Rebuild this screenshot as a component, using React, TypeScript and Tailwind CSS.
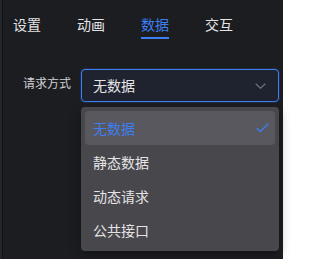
import { useState } from 'react';

const tabs = ['设置', '动画', '数据', '交互'];
const options = ['无数据', '静态数据', '动态请求', '公共接口'];

export default function App() {
  const [active, setActive] = useState(2);
  const [value, setValue] = useState('无数据');

  return (
    <div className="flex h-[259px] w-[283px] bg-[#1c1d21] font-['Noto_Sans_CJK_SC','Noto_Sans',sans-serif]">
      <div className="w-[2px] bg-[#25262a]" />
      <div className="w-px bg-[#111215]" />
      <div className="flex-1">
        <div className="flex gap-[36px] pl-[10px] pt-[14px]">
          {tabs.map((t, i) => (
            <button
              key={t}
              onClick={() => setActive(i)}
              className={`flex flex-col items-center text-[14px] leading-[20px] ${
                active === i ? 'text-[#3d7ef2]' : 'text-[#e4e4e6]'
              }`}
            >
              {t}
              <span
                className={`mt-[3px] h-[2px] w-full ${active === i ? 'bg-[#3d7ef2]' : 'bg-transparent'}`}
              />
            </button>
          ))}
        </div>

        <div className="mt-[30px] flex">
          <label className="w-[78px] pr-[10px] pt-[5px] text-right text-[12px] leading-[17px] text-[#cfd0d4]">
            请求方式
          </label>
          <div className="relative w-[198px]">
            <div className="flex h-[33px] items-center justify-between rounded-[4px] border border-[#3d7ef2] bg-[#1f2330] px-[11px] shadow-[0_0_0_1px_rgba(61,126,242,0.15)]">
              <span className="text-[14px] text-[#e6e6e8]">{value}</span>
              <svg width="11" height="6" viewBox="0 0 11 6" fill="none" className="mr-[1px]">
                <path d="M0.7 0.7L5.5 5.2L10.3 0.7" stroke="#6c6f78" strokeWidth="1.3" />
              </svg>
            </div>
            <div className="absolute left-0 top-[38px] w-[198px] rounded-[4px] bg-[#48474c] p-[4px] shadow-[0_4px_12px_rgba(0,0,0,0.35)]">
              {options.map((o) => (
                <button
                  key={o}
                  onClick={() => setValue(o)}
                  className={`flex h-[34px] w-full items-center justify-between rounded-[4px] pl-[8px] pr-[6px] text-[14px] ${
                    value === o ? 'bg-[#59585e] text-[#3d7ef2]' : 'text-[#e4e4e6]'
                  }`}
                >
                  {o}
                  {value === o && (
                    <svg width="13" height="10" viewBox="0 0 13 10" fill="none">
                      <path d="M0.8 5.2L4.4 8.6L12.2 0.8" stroke="#3d7ef2" strokeWidth="1.4" />
                    </svg>
                  )}
                </button>
              ))}
            </div>
          </div>
        </div>
      </div>
    </div>
  );
}
